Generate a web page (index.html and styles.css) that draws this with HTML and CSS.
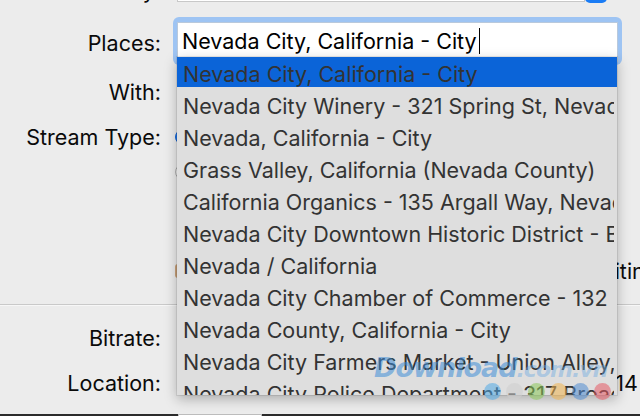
FILE: index.html
```html
<!DOCTYPE html>
<html>
<head>
<meta charset="utf-8">
<link rel="stylesheet" href="styles.css">
</head>
<body>
<div class="window">
  <div class="form">
    <div class="row row-top">
      <div class="label">City:</div>
      <div class="field-wrap">
        <div class="plain-field"></div>
        <div class="blue-btn"></div>
      </div>
    </div>
    <div class="row row-places">
      <div class="label">Places:</div>
      <div class="focus-ring">
        <div class="text-field">Nevada City, California - City<span class="caret"></span></div>
      </div>
    </div>
    <div class="row row-with">
      <div class="label">With:</div>
    </div>
    <div class="row row-stream">
      <div class="label">Stream Type:</div>
      <div class="radio radio-on"></div>
    </div>
    <div class="row row-radio2">
      <div class="label"></div>
      <div class="radio"></div>
    </div>
    <div class="row row-edit">
      <div class="label"></div>
      <div class="checkbox"></div>
      <div class="behind behind-edit">Allow Editing</div>
    </div>
  </div>
  <div class="separator"></div>
  <div class="form">
    <div class="row row-bitrate">
      <div class="label">Bitrate:</div>
    </div>
    <div class="row row-location">
      <div class="label">Location:</div>
      <div class="behind behind-loc">Movies 2014</div>
    </div>
  </div>
  <div class="bottom-bar">
    <div class="bottom-box"></div>
  </div>

  <div class="dropdown">
    <div class="item selected">Nevada City, California - City</div>
    <div class="item">Nevada City Winery - 321 Spring St, Nevada City</div>
    <div class="item">Nevada, California - City</div>
    <div class="item">Grass Valley, California (Nevada County)</div>
    <div class="item">California Organics - 135 Argall Way, Nevada City</div>
    <div class="item">Nevada City Downtown Historic District - Broad St</div>
    <div class="item">Nevada / California</div>
    <div class="item">Nevada City Chamber of Commerce - 132 Main St</div>
    <div class="item">Nevada County, California - City</div>
    <div class="item">Nevada City Farmers Market - Union Alley, Nevada City</div>
    <div class="item">Nevada City Police Department - 317 Broad St</div>
  </div>
  <div class="watermark">
    <span class="wm-text">Download<span class="wm-light">.com.vn</span></span>
    <div class="wm-dots">
      <span class="dot d1"></span><span class="dot d2"></span><span class="dot d3"></span><span class="dot d4"></span><span class="dot d5"></span><span class="dot d6"></span>
    </div>
  </div>
</div>
</body>
</html>
```
FILE: styles.css
```css
html, body {
  margin: 0;
  padding: 0;
}
body {
  background: #ececec;
  font-family: Inter, "Helvetica Neue", Arial, sans-serif;
  color: #111;
  width: 640px;
  height: 416px;
  overflow: hidden;
}
.window {
  position: relative;
  width: 640px;
  height: 416px;
  overflow: hidden;
}
.form {
  display: flex;
  flex-direction: column;
}
.row {
  display: flex;
  align-items: center;
}
.label {
  width: 161px;
  flex: none;
  text-align: right;
  font-size: 21.5px;
  line-height: 26px;
  color: #0a0a0a;
}
.row-top {
  height: 24px;
  margin-top: -21px;
  align-items: flex-end;
}
.field-wrap {
  display: flex;
  margin-left: 16px;
  height: 24px;
}
.plain-field {
  width: 406px;
  height: 22px;
  background: #fff;
  border: 1px solid #c8c8c8;
  border-top: none;
}
.blue-btn {
  width: 22px;
  height: 24px;
  background: #1a7cf5;
  border-radius: 0 0 5px 5px;
}
.row-places {
  margin-top: 14px;
  height: 48px;
  align-items: flex-start;
}
.row-places .label {
  margin-top: 13px;
}
.focus-ring {
  margin-left: 12px;
  width: 441px;
  height: 40px;
  padding: 5px 4px 3px;
  border-radius: 6px;
  background: #9ec4f3;
  display: flex;
}
.text-field {
  flex: 1;
  background: #fff;
  border: 1px solid #b9c9dc;
  font-size: 21.5px;
  line-height: 36px;
  padding-left: 4px;
  color: #000;
  white-space: nowrap;
  display: flex;
  align-items: flex-start;
}
.caret {
  display: inline-block;
  width: 1px;
  height: 26px;
  background: #000;
  margin-left: 2px;
  margin-top: 5px;
}
.row-with {
  height: 26px;
  margin-top: 14px;
}
.row-stream {
  height: 26px;
  margin-top: 19px;
}
.radio {
  width: 16px;
  height: 16px;
  border-radius: 50%;
  background: #fff;
  border: 1px solid #b0b0b0;
  margin-left: 14px;
  box-sizing: border-box;
}
.radio-on {
  background: #1f7cf2;
  border-color: #1565d8;
}
.row-radio2 {
  height: 24px;
  margin-top: 10px;
}
.row-edit {
  height: 26px;
  margin-top: 74px;
}
.checkbox {
  width: 14px;
  height: 14px;
  margin-left: 14px;
  border-radius: 3px;
  background: #c9a27a;
  flex: none;
}
.behind {
  flex: 1;
  font-size: 21.5px;
  white-space: nowrap;
  text-align: right;
  color: #0a0a0a;
}
.behind-edit {
  margin-right: -18px;
}
.separator {
  margin-top: 20px;
  height: 0;
  border-top: 1px solid #c9c9c9;
  border-bottom: 1px solid #f7f7f7;
}
.row-bitrate {
  margin-top: 19px;
  height: 26px;
}
.row-location {
  margin-top: 19px;
  height: 26px;
}
.behind-loc {
  margin-right: 2px;
}
.bottom-bar {
  margin-top: 18px;
  height: 3px;
  border-top: 2px solid #2b2b2b;
  background: #ececec;
  position: relative;
}
.bottom-box {
  position: absolute;
  left: 178px;
  top: -2px;
  width: 82px;
  height: 6px;
  background: #fff;
  border: 1px solid #bcbcbc;
}
.dropdown {
  position: absolute;
  left: 177px;
  top: 57px;
  width: 440px;
  height: 338px;
  overflow: hidden;
  background: #dedede;
  box-shadow: 0 4px 12px rgba(0,0,0,0.28), 0 0 0 1px rgba(0,0,0,0.08);
}
.item {
  height: 32px;
  line-height: 38px;
  font-size: 21.5px;
  color: #333;
  padding-left: 6px;
  margin-right: 3px;
  white-space: nowrap;
  overflow: hidden;
}
.item.selected {
  background: #0b64d8;
  height: 30px;
  line-height: 34px;
  margin-right: 0;
}
.watermark {
  position: absolute;
  left: 374px;
  top: 351px;
  pointer-events: none;
}
.wm-text {
  font-family: "DejaVu Sans", sans-serif;
  font-weight: bold;
  font-style: italic;
  font-size: 27px;
  line-height: 34px;
  color: rgba(60, 140, 215, 0.55);
  letter-spacing: -1px;
}
.wm-light {
  color: rgba(110, 170, 225, 0.45);
  font-size: 22px;
}
.wm-dots {
  display: flex;
  gap: 5px;
  margin-top: -4px;
  margin-left: 110px;
}
.dot {
  width: 17px;
  height: 17px;
  border-radius: 50%;
}
.d1 { background: rgba(80,170,230,0.55); }
.d2 { background: rgba(205,205,205,0.55); }
.d3 { background: rgba(140,200,90,0.55); }
.d4 { background: rgba(240,180,80,0.55); }
.d5 { background: rgba(80,140,210,0.55); }
.d6 { background: rgba(230,90,100,0.55); }
```
